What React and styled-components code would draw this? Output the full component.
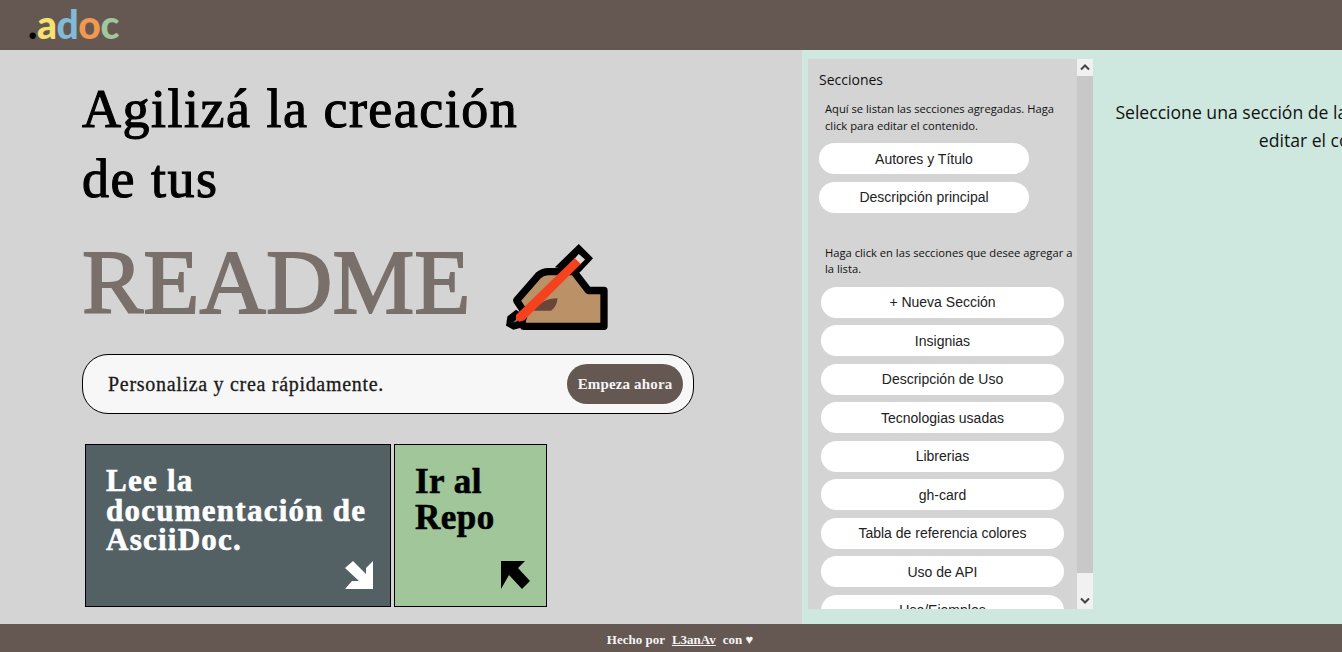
import React from 'react'
import styled, { createGlobalStyle } from 'styled-components'

const GlobalStyle = createGlobalStyle`
  html, body {
    margin: 0;
    padding: 0;
    height: 652px;
    overflow: hidden;
    background: #d4d4d4;
  }
  * { box-sizing: border-box; }
`

const Page = styled.div`
  display: flex;
  flex-direction: column;
  width: 1342px;
  height: 652px;
  overflow: hidden;
`

const Header = styled.header`
  flex: 0 0 50px;
  display: flex;
  align-items: center;
  padding: 0 0 3px 28px;
  background: #655853;
`

const Logo = styled.div`
  display: flex;
  align-items: baseline;
  font-family: Lato, sans-serif;
  font-weight: 900;
  font-size: 39px;
  line-height: 44px;
  letter-spacing: -0.4px;
`

const LogoLetter = styled.span`
  color: ${p => p.$color};
`

const Main = styled.main`
  flex: 1;
  display: flex;
  min-height: 0;
`

const Hero = styled.section`
  flex: 0 0 802px;
  padding: 24px 0 0 82px;
  font-family: "Liberation Serif", serif;
`

const Title = styled.h1`
  margin: 0;
  width: 450px;
  font-size: 54px;
  line-height: 70px;
  letter-spacing: 1.5px;
  font-weight: 400;
  color: #000;
  -webkit-text-stroke: 1.1px #000;
`

const ReadmeRow = styled.div`
  display: flex;
  align-items: center;
  gap: 33px;
  height: 108px;
  margin-top: 14px;
`

const Readme = styled.span`
  font-size: 92px;
  line-height: 100px;
  color: #7a706b;
  -webkit-text-stroke: 1.8px #7a706b;
`

const HandIcon = styled.svg`
  flex: none;
  margin-top: 8px;
`

const CtaBar = styled.div`
  display: flex;
  align-items: center;
  justify-content: space-between;
  width: 612px;
  height: 60px;
  margin-top: 18px;
  padding: 0 10px 0 25px;
  border: 1px solid #000;
  border-radius: 26px;
  background: #f7f7f7;
`

const CtaText = styled.span`
  font-size: 20px;
  letter-spacing: 0.7px;
  color: #1a1a1a;
  -webkit-text-stroke: 0.3px #1a1a1a;
`

const CtaButton = styled.button`
  width: 116px;
  height: 40px;
  padding: 0;
  border: 0;
  border-radius: 20px;
  background: #655853;
  color: #f5f5f5;
  font-family: "Liberation Serif", serif;
  font-size: 15px;
  letter-spacing: 0.15px;
  font-weight: 700;
`

const Cards = styled.div`
  display: flex;
  gap: 3px;
  margin: 30px 0 0 3px;
`

const Card = styled.a`
  position: relative;
  display: block;
  width: ${p => p.$width}px;
  height: 163px;
  padding: ${p => p.$pad};
  border: 1px solid #000;
  background: ${p => p.$bg};
  color: ${p => p.$fg};
  font-size: ${p => p.$size}px;
  line-height: ${p => p.$line}px;
  letter-spacing: ${p => p.$track}px;
  font-weight: 700;
  -webkit-text-stroke: 0.6px ${p => p.$fg};
`

const CardArrow = styled.svg`
  position: absolute;
  right: 16px;
  bottom: 16px;
  width: 30px;
  height: 30px;
`

const Builder = styled.section`
  flex: 1;
  display: flex;
  min-width: 0;
  padding: 9px 0 15px 6px;
  background: #cfe8df;
  font-family: "Open Sans", sans-serif;
`

const Sidebar = styled.aside`
  position: relative;
  flex: 0 0 285px;
  height: 550px;
  overflow: hidden;
  background: #d4d4d4;
`

const SidebarContent = styled.div`
  width: 269px;
  padding: 11px 0 0 11px;
`

const SidebarTitle = styled.h2`
  margin: 0;
  font-size: 14px;
  line-height: 20px;
  font-weight: 400;
  color: #111;
`

const Hint = styled.p`
  width: 248px;
  margin: ${p => p.$top}px 0 9px 6px;
  font-size: 11.2px;
  line-height: 16.5px;
  color: #111;
`

const PillList = styled.div`
  display: flex;
  flex-direction: column;
  gap: 7.5px;
  margin-left: ${p => p.$left || 0}px;
`

const Pill = styled.button`
  flex: none;
  width: ${p => p.$width}px;
  height: 31px;
  padding: 0;
  border: 0;
  border-radius: 16px;
  background: #fff;
  color: #222;
  font-family: "Liberation Sans", sans-serif;
  font-size: 14px;
`

const Scrollbar = styled.div`
  position: absolute;
  top: 0;
  right: 0;
  bottom: 0;
  width: 16px;
  display: flex;
  flex-direction: column;
  background: #f1f1f1;
`

const ScrollButton = styled.div`
  flex: 0 0 17px;
  display: flex;
  align-items: center;
  justify-content: center;
`

const ScrollThumb = styled.div`
  height: 497px;
  background: #c8c8c8;
`

const ScrollRest = styled.div`
  flex: 1;
`

const EditorNote = styled.div`
  flex: 0 0 446px;
  padding-top: 39px;
  margin-left: 20px;
  text-align: center;
  font-size: 17.6px;
  line-height: 28px;
  color: #111;
`

const Footer = styled.footer`
  flex: 0 0 28px;
  display: flex;
  align-items: center;
  justify-content: center;
  gap: 4px;
  padding: 3px 0 0 18px;
  background: #655853;
  color: #f5f5f5;
  font-family: "Liberation Serif", serif;
  font-size: 13px;
  font-weight: 700;
`

const FooterLink = styled.a`
  margin: 0 3px;
  color: inherit;
  text-decoration: underline;
`

const WritingHand = () => (
  <HandIcon width="107" height="93" viewBox="70 30 320 280">
    <path
      d="M205 125 H282 L326 182 H373 V290 H130 L120 262 L132 245 L110 212 L175 137 Q188 125 205 125 Z"
      fill="#bb9167"
      stroke="#000"
      strokeWidth="22"
      strokeLinejoin="round"
    />
    <path d="M160 243 Q186 205 233 205 Q232 228 214 243 Z" fill="#6a4639" />
    <path d="M225 112 L297 42 L340 85 L300 128 Z" fill="#000" />
    <path d="M108 240 L142 262 L132 292 L100 300 L78 288 L82 260 Z" fill="#000" />
    <path d="M283 88 L297 72 L316 89 L301 104 Z" fill="#dcd8cc" />
    <path d="M108 256 L285 84 L303 102 L132 272 L118 276 L108 270 Z" fill="#f4421f" />
    <path d="M99 279 L110 268 L113 274 Z" fill="#7d8a96" />
  </HandIcon>
)

const SidebarChevron = ({ up }) => (
  <svg width="10" height="7" viewBox="0 0 10 7">
    <path d={up ? 'M1 5.5 L5 1.5 L9 5.5' : 'M1 1.5 L5 5.5 L9 1.5'} fill="none" stroke="#444" strokeWidth="2" />
  </svg>
)

const added = ['Autores y Título', 'Descripción principal']
const available = [
  '+ Nueva Sección',
  'Insignias',
  'Descripción de Uso',
  'Tecnologias usadas',
  'Librerias',
  'gh-card',
  'Tabla de referencia colores',
  'Uso de API',
  'Uso/Ejemplos',
]

export default function App() {
  return (
    <Page>
      <GlobalStyle />
      <Header>
        <Logo>
          <LogoLetter $color="#000">.</LogoLetter>
          <LogoLetter $color="#f6e36f">a</LogoLetter>
          <LogoLetter $color="#82bbd8">d</LogoLetter>
          <LogoLetter $color="#ef9a50">o</LogoLetter>
          <LogoLetter $color="#a0c89a">c</LogoLetter>
        </Logo>
      </Header>
      <Main>
        <Hero>
          <Title>Agilizá la creación de tus</Title>
          <ReadmeRow>
            <Readme>README</Readme>
            <WritingHand />
          </ReadmeRow>
          <CtaBar>
            <CtaText>Personaliza y crea rápidamente.</CtaText>
            <CtaButton>Empeza ahora</CtaButton>
          </CtaBar>
          <Cards>
            <Card $width={306} $bg="#536064" $fg="#fff" $size={31} $line={29.5} $track={1.25} $pad="21px 20px">
              Lee la documentación de AsciiDoc.
              <CardArrow viewBox="0 0 30 30">
                <path d="M29 1 V29 H1 L8 21 H15 L1 8 L9 1 L22 14 V8 Z" fill="#fff" />
              </CardArrow>
            </Card>
            <Card $width={153} $bg="#a1c69a" $fg="#000" $size={35} $line={36} $track={0.5} $pad="19px 20px">
              Ir al Repo
              <CardArrow viewBox="0 0 30 30">
                <path d="M1 1 H25 L18 8 L30 21 L22 29 L9 15 L1 29 Z" fill="#000" />
              </CardArrow>
            </Card>
          </Cards>
        </Hero>
        <Builder>
          <Sidebar>
            <SidebarContent>
              <SidebarTitle>Secciones</SidebarTitle>
              <Hint $top={11}>Aquí se listan las secciones agregadas. Haga click para editar el contenido.</Hint>
              <PillList>
                {added.map(name => <Pill key={name} $width={210}>{name}</Pill>)}
              </PillList>
              <Hint $top={32}>Haga click en las secciones que desee agregar a la lista.</Hint>
              <PillList $left={2}>
                {available.map(name => <Pill key={name} $width={243}>{name}</Pill>)}
              </PillList>
            </SidebarContent>
            <Scrollbar>
              <ScrollButton><SidebarChevron up /></ScrollButton>
              <ScrollThumb />
              <ScrollRest />
              <ScrollButton><SidebarChevron /></ScrollButton>
            </Scrollbar>
          </Sidebar>
          <EditorNote>Seleccione una sección de la lista de la izquierda, para editar el contenido</EditorNote>
        </Builder>
      </Main>
      <Footer>
        Hecho por <FooterLink>L3anAv</FooterLink> con ♥
      </Footer>
    </Page>
  )
}
